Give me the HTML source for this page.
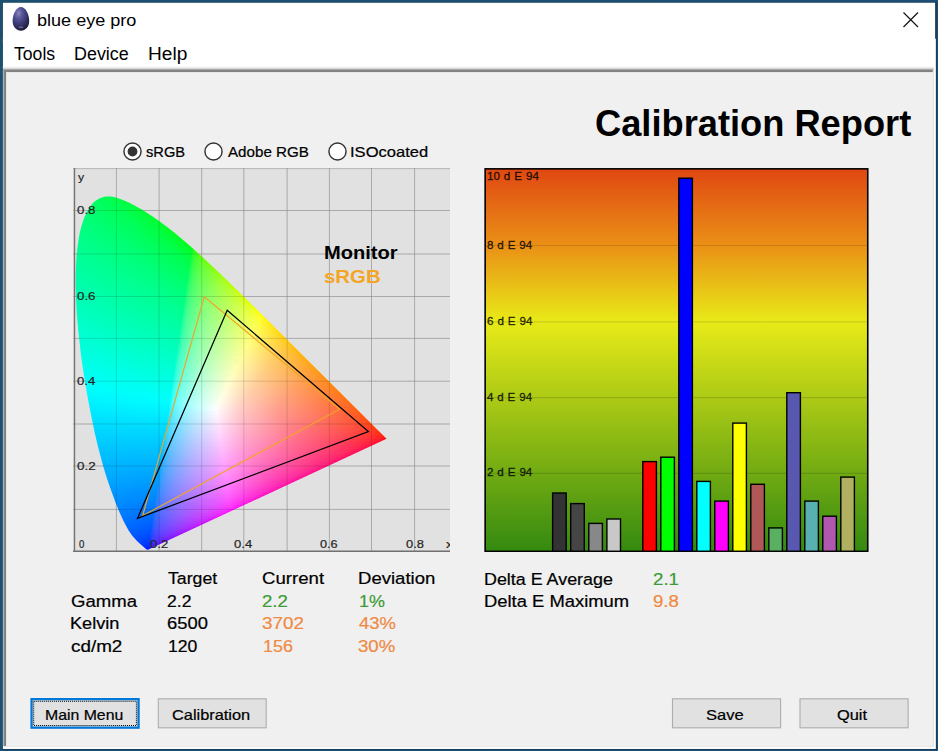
<!DOCTYPE html>
<html><head><meta charset="utf-8"><title>blue eye pro</title>
<style>
html,body{margin:0;padding:0}
body{width:938px;height:751px;overflow:hidden;background:#1b5071;position:relative;font-family:"Liberation Sans",sans-serif;color:#000}
.a{position:absolute;white-space:pre;line-height:1}
.t{transform-origin:0 0;-webkit-text-stroke:.22px}
.rad{position:absolute;width:19px;height:19px}
#cie{position:absolute;left:73px;top:168px;width:377px;height:384px;background:#e1e1e1;overflow:hidden}
#cfill{position:absolute;left:0;top:0;width:378px;height:384px;clip-path:polygon(75.0px 381.7px,73.6px 381.5px,66.1px 374.9px,63.3px 372.3px,59.3px 367.7px,55.5px 362.2px,50.9px 353.7px,46.4px 344.1px,42.6px 334.8px,36.8px 318.7px,33.5px 309.1px,30.2px 298.3px,25.2px 279.5px,21.9px 265.5px,17.1px 242.3px,13.9px 225.3px,11.0px 208.0px,8.4px 190.2px,5.3px 163.2px,3.8px 145.8px,2.9px 128.8px,2.6px 112.6px,2.7px 104.9px,3.4px 90.1px,4.0px 83.1px,5.8px 70.1px,6.9px 64.2px,8.3px 58.8px,9.8px 53.7px,11.6px 49.1px,13.4px 44.9px,15.4px 41.1px,17.5px 37.9px,19.8px 35.2px,22.2px 33.1px,24.7px 31.4px,27.3px 30.1px,29.9px 29.2px,32.6px 28.6px,35.3px 28.4px,38.1px 28.6px,40.9px 29.1px,46.7px 30.8px,52.4px 32.9px,55.3px 34.3px,61.1px 37.3px,69.6px 42.1px,80.4px 49.0px,85.7px 52.7px,93.5px 58.5px,101.2px 64.5px,108.9px 70.9px,119.1px 79.7px,131.8px 91.2px,147.0px 105.5px,162.2px 120.2px,194.8px 152.4px,313.5px 270.8px)}
#cfill i{position:absolute;display:block;height:2px}
#bars{position:absolute;left:485px;top:169px;width:383px;height:382px;background:linear-gradient(180deg,#e04812 0,#ea9016 20%,#e8ea18 40%,#348a10 100%)}
</style></head>
<body>
<svg class="a" style="left:0;top:0" width="938" height="751" viewBox="0 0 938 751">
<defs>
<linearGradient id="gt" x1="0" y1="66" x2="0" y2="72.2" gradientUnits="userSpaceOnUse"><stop offset="0" stop-color="#fdfdfd"/><stop offset=".25" stop-color="#f0f0f0"/><stop offset=".5" stop-color="#c2c2c2"/><stop offset=".66" stop-color="#8a8a8a"/><stop offset=".82" stop-color="#7a7a7a"/><stop offset=".93" stop-color="#868686"/><stop offset="1" stop-color="#c8c8c8"/></linearGradient>
<linearGradient id="gl" x1="2.9" y1="0" x2="6.2" y2="0" gradientUnits="userSpaceOnUse"><stop offset="0" stop-color="#a3bac7"/><stop offset=".3" stop-color="#a0b2bd"/><stop offset=".4" stop-color="#868889"/><stop offset=".85" stop-color="#7c7c7c"/><stop offset="1" stop-color="#c0c0c0"/></linearGradient>
</defs>
<linearGradient id="gb" x1="0" x2="1" y1="0" y2="0"><stop offset="0" stop-color="#1b5071"/><stop offset=".6" stop-color="#1c4f72"/><stop offset="1" stop-color="#1f4d76"/></linearGradient><rect width="938" height="751" fill="url(#gb)"/>
<rect x="2.1" y="2" width="934.9" height="747.9" fill="#173f59"/>
<rect x="2.9" y="2.75" width="932.2" height="40" fill="#fff"/>
<rect x="2.9" y="38.7" width="932.95" height="710.25" fill="#fff"/>
<rect x="6" y="72" width="927" height="674" fill="#f0f0f0"/>
<rect x="2.9" y="66" width="931" height="6.2" fill="url(#gt)"/>
<rect x="2.9" y="70.2" width="3.3" height="676" fill="url(#gl)"/>
<rect x="932.8" y="69.5" width="1.3" height="677.5" fill="#e5e5e5"/>
<rect x="4.5" y="746" width="929.5" height="1.05" fill="#e8e8e8"/>
</svg>

<!-- title bar -->
<svg class="a" style="left:10px;top:6px" width="22" height="27" viewBox="0 0 22 27">
<defs><radialGradient id="egg" cx="36%" cy="26%" r="74%"><stop offset="0" stop-color="#8886b8"/><stop offset=".3" stop-color="#58569a"/><stop offset=".62" stop-color="#3c3a76"/><stop offset=".88" stop-color="#2a2850"/><stop offset="1" stop-color="#201e3a"/></radialGradient></defs>
<path d="M10.9 1 C15.4 1 19.2 8 19.2 15 C19.2 20.6 15.6 24.7 10.9 24.7 C6.2 24.7 2.6 20.6 2.6 15 C2.6 8 6.4 1 10.9 1Z" fill="url(#egg)"/>
<ellipse cx="11" cy="21.2" rx="2.5" ry=".8" fill="#8886b0" opacity=".7"/>
</svg>
<svg class="a" style="left:900px;top:9px" width="22" height="22" viewBox="0 0 22 22"><path d="M3.5 3.5L18 18M18 3.5L3.500 18" stroke="#111" stroke-width="1.15" fill="none"/></svg>

<!-- menu -->


<!-- heading -->

<!-- radios -->
<svg class="rad" style="left:122.9px;top:141.5px" viewBox="0 0 19 19"><circle cx="9.5" cy="9.5" r="8.55" fill="#fff" stroke="#333" stroke-width="1.45"/><circle cx="9.5" cy="9.5" r="4.9" fill="#333"/></svg>
<svg class="rad" style="left:204.2px;top:141.5px" viewBox="0 0 19 19"><circle cx="9.5" cy="9.5" r="8.55" fill="#fff" stroke="#333" stroke-width="1.45"/></svg>
<svg class="rad" style="left:328.4px;top:141.5px" viewBox="0 0 19 19"><circle cx="9.5" cy="9.5" r="8.55" fill="#fff" stroke="#333" stroke-width="1.45"/></svg>

<!-- CIE chart -->
<div id="cie">
<svg class="a" style="left:0;top:0" width="378" height="384" viewBox="73 168 378 384">
<g stroke="#c3c3c3" stroke-width=".95" fill="none">
<path d="M116.4 168V552M159.1 168V552M201.7 168V552M243.8 168V552M287.1 168V552M329.4 168V552M371.5 168V552M414.6 168V552"/>
<path d="M73 210.5H451M73 254H451M73 296.5H451M73 338.4H451M73 381.2H451M73 424H451M73 466H451M73 509.4H451"/>
<path d="M73 168.6H451" stroke="#b4b4b4"/>
</g>
</svg>
<div id="cfill">
<i style="top:27px;left:29px;width:14px;background:linear-gradient(90deg,#00ff57 0px,#00ff4a 13px)"></i>
<i style="top:29px;left:24px;width:26px;background:linear-gradient(90deg,#00ff5e 0px,#00ff44 25px)"></i>
<i style="top:31px;left:21px;width:34px;background:linear-gradient(90deg,#00ff62 0px,#00ff3f 33px)"></i>
<i style="top:33px;left:19px;width:40px;background:linear-gradient(90deg,#00ff66 0px,#00ff43 35px,#00ff3c 39px)"></i>
<i style="top:35px;left:17px;width:46px;background:linear-gradient(90deg,#00ff69 0px,#00ff46 37px,#00ff39 45px)"></i>
<i style="top:37px;left:15px;width:52px;background:linear-gradient(90deg,#00ff6c 0px,#00ff49 39px,#00ff35 51px)"></i>
<i style="top:39px;left:14px;width:56px;background:linear-gradient(90deg,#00ff6e 0px,#00ff4a 41px,#00ff34 55px)"></i>
<i style="top:41px;left:13px;width:60px;background:linear-gradient(90deg,#00ff71 0px,#00ff4d 42px,#00ff32 59px)"></i>
<i style="top:43px;left:12px;width:65px;background:linear-gradient(90deg,#00ff73 0px,#00ff4f 44px,#00ff2f 63px,#00ff2d 64px)"></i>
<i style="top:45px;left:11px;width:69px;background:linear-gradient(90deg,#00ff75 0px,#00ff51 45px,#00ff32 65px,#00ff2a 68px)"></i>
<i style="top:47px;left:10px;width:73px;background:linear-gradient(90deg,#00ff77 0px,#00ff53 47px,#00ff32 68px,#00ff27 72px)"></i>
<i style="top:49px;left:9px;width:77px;background:linear-gradient(90deg,#00ff7a 0px,#00ff54 49px,#00ff35 70px,#00ff24 76px)"></i>
<i style="top:51px;left:9px;width:80px;background:linear-gradient(90deg,#00ff7b 0px,#00ff56 50px,#00ff35 72px,#00ff20 79px)"></i>
<i style="top:53px;left:8px;width:83px;background:linear-gradient(90deg,#00ff7d 0px,#00ff58 51px,#00ff38 74px,#00ff20 82px)"></i>
<i style="top:55px;left:7px;width:87px;background:linear-gradient(90deg,#00ff7f 0px,#00ff59 53px,#00ff38 77px,#00ff21 85px,#00ff1b 86px)"></i>
<i style="top:57px;left:7px;width:90px;background:linear-gradient(90deg,#00ff81 0px,#00ff5c 53px,#00ff3a 78px,#00ff21 87px,#00ff15 89px)"></i>
<i style="top:59px;left:6px;width:93px;background:linear-gradient(90deg,#00ff83 0px,#00ff5d 55px,#00ff3c 80px,#00ff21 90px,#00ff15 92px)"></i>
<i style="top:61px;left:6px;width:96px;background:linear-gradient(90deg,#00ff84 0px,#00ff5e 56px,#00ff3d 82px,#00ff21 92px,#00ff16 94px,#00ff07 95px)"></i>
<i style="top:63px;left:5px;width:99px;background:linear-gradient(90deg,#00ff86 0px,#00ff61 57px,#00ff3f 84px,#00ff26 94px,#00ff16 97px,#00ff08 98px)"></i>
<i style="top:65px;left:5px;width:102px;background:linear-gradient(90deg,#00ff88 0px,#00ff62 58px,#00ff3f 86px,#00ff26 96px,#00ff16 99px,#00ff00 101px)"></i>
<i style="top:67px;left:4px;width:105px;background:linear-gradient(90deg,#00ff8a 0px,#00ff63 60px,#00ff41 88px,#00ff26 99px,#00ff17 102px,#00ff00 104px)"></i>
<i style="top:69px;left:4px;width:108px;background:linear-gradient(90deg,#00ff8b 0px,#00ff65 60px,#00ff43 89px,#00ff27 101px,#00ff17 104px,#00ff00 106px,#00ff00 107px)"></i>
<i style="top:71px;left:4px;width:110px;background:linear-gradient(90deg,#00ff8d 0px,#00ff67 61px,#00ff44 91px,#00ff27 103px,#00ff17 106px,#00ff00 108px,#00ff00 109px)"></i>
<i style="top:73px;left:4px;width:112px;background:linear-gradient(90deg,#00ff8e 0px,#00ff68 62px,#00ff46 92px,#00ff2b 104px,#00ff18 108px,#00ff00 110px,#00ff00 111px)"></i>
<i style="top:75px;left:3px;width:116px;background:linear-gradient(90deg,#00ff90 0px,#00ff69 64px,#00ff46 95px,#00ff2b 107px,#00ff18 111px,#00ff00 113px,#00ff00 115px)"></i>
<i style="top:77px;left:3px;width:118px;background:linear-gradient(90deg,#00ff92 0px,#00ff6b 65px,#00ff48 96px,#00ff2b 109px,#00ff19 113px,#00ff00 115px,#05ff00 117px)"></i>
<i style="top:79px;left:3px;width:120px;background:linear-gradient(90deg,#00ff93 0px,#00ff6d 65px,#00ff4a 97px,#00ff2c 111px,#00ff19 115px,#00ff0f 116px,#15ff00 117px,#27ff00 118px,#31ff00 119px)"></i>
<i style="top:81px;left:3px;width:122px;background:linear-gradient(90deg,#00ff94 0px,#00ff6e 66px,#00ff4a 99px,#00ff2c 113px,#00ff20 116px,#1cff19 117px,#34ff00 119px,#42ff00 121px)"></i>
<i style="top:83px;left:2px;width:125px;background:linear-gradient(90deg,#00ff96 0px,#00ff6f 68px,#00ff4b 102px,#00ff2c 116px,#00ff29 117px,#21ff25 118px,#3dff10 121px,#44ff00 122px,#4eff00 124px)"></i>
<i style="top:85px;left:2px;width:128px;background:linear-gradient(90deg,#00ff98 0px,#00ff71 68px,#00ff4d 103px,#00ff33 116px,#25ff2d 118px,#3fff20 121px,#4bff10 123px,#50ff00 124px,#5cff00 127px)"></i>
<i style="top:87px;left:2px;width:130px;background:linear-gradient(90deg,#00ff99 0px,#00ff73 69px,#00ff4f 104px,#00ff38 116px,#1aff36 117px,#33ff30 119px,#51ff1a 124px,#56ff11 125px,#5aff00 126px,#65ff00 129px)"></i>
<i style="top:89px;left:2px;width:132px;background:linear-gradient(90deg,#00ff9b 0px,#00ff74 70px,#00ff4f 106px,#00ff3d 116px,#1fff3b 117px,#36ff36 119px,#57ff21 125px,#5fff11 127px,#63ff00 128px,#6dff00 131px)"></i>
<i style="top:91px;left:2px;width:134px;background:linear-gradient(90deg,#00ff9c 0px,#00ff75 71px,#00ff51 107px,#00ff44 115px,#0aff42 116px,#24ff40 117px,#3fff39 120px,#60ff21 127px,#68ff12 129px,#6bff00 130px,#74ff00 133px)"></i>
<i style="top:93px;left:2px;width:136px;background:linear-gradient(90deg,#00ff9d 0px,#00ff76 72px,#00ff51 109px,#00ff48 115px,#28ff44 117px,#47ff3c 121px,#69ff22 129px,#6fff12 131px,#72ff00 132px,#7bff00 135px)"></i>
<i style="top:95px;left:2px;width:138px;background:linear-gradient(90deg,#00ff9f 0px,#00ff78 72px,#00ff53 110px,#00ff4b 115px,#1dff4a 116px,#35ff46 118px,#57ff3a 124px,#71ff22 131px,#76ff13 133px,#79ff00 134px,#81ff00 137px)"></i>
<i style="top:97px;left:1px;width:142px;background:linear-gradient(90deg,#00ffa1 0px,#00ff7a 74px,#00ff55 112px,#00ff4f 116px,#22ff4d 117px,#3fff48 120px,#65ff38 128px,#78ff22 134px,#7dff13 136px,#80ff00 137px,#8aff00 141px)"></i>
<i style="top:99px;left:1px;width:144px;background:linear-gradient(90deg,#00ffa2 0px,#00ff7b 75px,#00ff57 113px,#00ff54 115px,#27ff51 117px,#41ff4c 120px,#66ff3d 128px,#7eff23 136px,#84ff14 138px,#86ff00 139px,#90ff00 143px)"></i>
<i style="top:101px;left:1px;width:146px;background:linear-gradient(90deg,#00ffa3 0px,#00ff7d 75px,#00ff58 114px,#00ff57 115px,#1bff56 116px,#35ff53 118px,#58ff49 124px,#80ff2c 136px,#8aff14 140px,#8cff00 141px,#96ff00 145px)"></i>
<i style="top:103px;left:1px;width:148px;background:linear-gradient(90deg,#00ffa5 0px,#00ff7e 76px,#00ff5a 115px,#21ff59 116px,#37ff56 118px,#59ff4d 124px,#83ff30 137px,#8dff1d 141px,#90ff15 142px,#92ff00 143px,#9bff00 147px)"></i>
<i style="top:105px;left:1px;width:150px;background:linear-gradient(90deg,#00ffa6 0px,#00ff80 77px,#00ff5e 114px,#0eff5d 115px,#25ff5c 116px,#41ff58 119px,#66ff4c 127px,#8aff30 139px,#93ff1e 143px,#96ff15 144px,#98ff00 145px,#a0ff00 149px)"></i>
<i style="top:107px;left:1px;width:152px;background:linear-gradient(90deg,#00ffa8 0px,#00ff81 78px,#00ff61 114px,#18ff60 115px,#29ff5f 116px,#49ff5a 120px,#72ff4b 130px,#92ff2d 142px,#9bff16 146px,#9dff00 147px,#a6ff00 151px)"></i>
<i style="top:109px;left:1px;width:154px;background:linear-gradient(90deg,#00ffa9 0px,#00ff83 78px,#00ff64 114px,#1fff63 115px,#37ff61 117px,#59ff59 123px,#87ff41 137px,#9cff24 146px,#a1ff16 148px,#a3ff00 149px,#abff00 153px)"></i>
<i style="top:111px;left:1px;width:156px;background:linear-gradient(90deg,#00ffab 0px,#00ff84 79px,#00ff67 114px,#24ff66 115px,#41ff62 118px,#67ff58 126px,#97ff37 143px,#a4ff1f 149px,#a6ff17 150px,#a8ff00 151px,#b0ff00 155px)"></i>
<i style="top:113px;left:1px;width:158px;background:linear-gradient(90deg,#00ffac 0px,#00ff85 80px,#00ff6a 113px,#28ff68 115px,#43ff65 118px,#68ff5b 126px,#9aff3b 144px,#a9ff1f 151px,#abff17 152px,#adff00 153px,#b5ff00 157px)"></i>
<i style="top:115px;left:1px;width:160px;background:linear-gradient(90deg,#00ffad 0px,#00ff87 81px,#00ff6d 113px,#1dff6c 114px,#36ff6a 116px,#5aff63 122px,#88ff50 136px,#a6ff32 149px,#aeff20 153px,#b0ff18 154px,#b2ff02 155px,#baff00 159px)"></i>
<i style="top:117px;left:1px;width:162px;background:linear-gradient(90deg,#00ffaf 0px,#00ff89 81px,#00ff70 113px,#22ff6f 114px,#39ff6d 116px,#5bff66 122px,#89ff54 136px,#a9ff36 150px,#b3ff20 155px,#b5ff18 156px,#b7ff06 157px,#b9ff00 158px,#bfff00 161px)"></i>
<i style="top:119px;left:1px;width:164px;background:linear-gradient(90deg,#00ffb0 0px,#00ff8a 82px,#00ff73 112px,#27ff71 114px,#43ff6e 117px,#69ff66 125px,#9bff4b 143px,#b3ff2f 154px,#baff19 158px,#bcff08 159px,#beff00 160px,#c3ff00 163px)"></i>
<i style="top:121px;left:1px;width:167px;background:linear-gradient(90deg,#00ffb2 0px,#00ff8b 83px,#00ff76 112px,#1aff75 113px,#2bff74 114px,#4bff70 118px,#75ff65 128px,#aaff44 149px,#bcff27 158px,#bfff19 160px,#c1ff0a 161px,#c3ff00 162px,#caff00 166px)"></i>
<i style="top:123px;left:1px;width:169px;background:linear-gradient(90deg,#00ffb3 0px,#00ff8d 84px,#00ff78 112px,#20ff77 113px,#38ff75 115px,#5cff6f 121px,#8aff5f 135px,#b3ff3f 153px,#c0ff27 160px,#c4ff1a 162px,#c8ff00 164px,#cfff00 168px)"></i>
<i style="top:125px;left:1px;width:171px;background:linear-gradient(90deg,#00ffb5 0px,#00ff8f 84px,#00ff7b 111px,#08ff7a 112px,#25ff79 113px,#42ff77 116px,#69ff6f 124px,#9aff5a 141px,#bcff3a 157px,#c7ff22 163px,#c9ff1a 164px,#cdff00 166px,#d3ff00 170px)"></i>
<i style="top:127px;left:1px;width:173px;background:linear-gradient(90deg,#00ffb6 0px,#00ff90 85px,#00ff7e 111px,#2aff7c 113px,#45ff79 116px,#6bff72 124px,#9eff5c 142px,#c1ff3b 159px,#ccff22 165px,#ceff1b 166px,#d1ff00 168px,#d8ff00 172px)"></i>
<i style="top:129px;left:1px;width:175px;background:linear-gradient(90deg,#00ffb8 0px,#00ff91 86px,#00ff80 111px,#1eff7f 112px,#38ff7d 114px,#5cff78 120px,#89ff6b 133px,#bdff48 156px,#cdff2d 165px,#d3ff1b 168px,#d6ff00 170px,#ddff00 174px)"></i>
<i style="top:131px;left:2px;width:176px;background:linear-gradient(90deg,#00ffb9 0px,#00ff93 86px,#00ff82 110px,#24ff81 111px,#3aff80 113px,#5eff7b 119px,#8dff6d 133px,#c0ff4a 156px,#d2ff2d 166px,#d7ff1c 169px,#dbff00 171px,#e2ff00 175px)"></i>
<i style="top:133px;left:2px;width:178px;background:linear-gradient(90deg,#00ffba 0px,#00ff94 87px,#00ff85 109px,#28ff84 111px,#44ff81 114px,#6cff7a 122px,#9dff69 139px,#c9ff46 160px,#d9ff29 169px,#dcff1c 171px,#e0ff00 173px,#e6ff00 177px)"></i>
<i style="top:135px;left:2px;width:180px;background:linear-gradient(90deg,#00ffbc 0px,#00ff96 88px,#00ff87 109px,#1cff87 110px,#37ff85 112px,#58ff81 117px,#84ff76 129px,#beff57 154px,#d8ff36 168px,#e1ff1d 173px,#e4ff00 175px,#ebff00 179px)"></i>
<i style="top:137px;left:2px;width:182px;background:linear-gradient(90deg,#00ffbd 0px,#00ff98 88px,#00ff8a 109px,#22ff89 110px,#3aff87 112px,#5eff83 118px,#8bff77 131px,#c7ff54 158px,#ddff37 170px,#e6ff1d 175px,#e9ff00 177px,#f0ff00 181px)"></i>
<i style="top:139px;left:2px;width:184px;background:linear-gradient(90deg,#00ffbf 0px,#00ff99 89px,#00ff8d 108px,#0cff8c 109px,#27ff8b 110px,#44ff89 113px,#6cff83 121px,#9eff73 138px,#d2ff4f 163px,#e5ff2f 174px,#eaff1d 177px,#ecff12 178px,#eeff00 179px,#f4ff00 183px)"></i>
<i style="top:141px;left:2px;width:186px;background:linear-gradient(90deg,#00ffc0 0px,#00ff9a 90px,#00ff8f 108px,#19ff8e 109px,#2bff8d 110px,#47ff8b 113px,#6eff85 121px,#a0ff75 138px,#d5ff51 164px,#e9ff34 175px,#efff1e 179px,#f1ff12 180px,#f3ff00 181px,#f9ff00 185px)"></i>
<i style="top:143px;left:2px;width:188px;background:linear-gradient(90deg,#00ffc2 0px,#00ff9c 90px,#00ff91 108px,#20ff90 109px,#39ff8f 111px,#5fff8b 117px,#8cff80 130px,#caff61 157px,#e8ff3e 174px,#f2ff26 180px,#f6ff13 182px,#f7ff00 183px,#feff00 187px)"></i>
<i style="top:145px;left:2px;width:190px;background:linear-gradient(90deg,#00ffc3 0px,#00ff9e 91px,#00ff93 108px,#25ff93 109px,#44ff91 112px,#69ff8b 119px,#9bff7e 135px,#d8ff5a 164px,#f1ff38 178px,#f9ff1f 183px,#faff14 184px,#fcff00 185px,#fffb00 189px)"></i>
<i style="top:147px;left:2px;width:192px;background:linear-gradient(90deg,#00ffc5 0px,#00ff9f 92px,#00ff96 107px,#2aff95 109px,#46ff93 112px,#6eff8d 120px,#a1ff7f 137px,#ddff5a 166px,#f5ff39 180px,#feff1f 185px,#ffff14 186px,#fffd00 187px,#fff700 191px)"></i>
<i style="top:149px;left:3px;width:193px;background:linear-gradient(90deg,#00ffc6 0px,#00ffa1 92px,#00ff98 106px,#1eff98 107px,#39ff96 109px,#5aff93 114px,#88ff8a 126px,#c4ff72 151px,#eeff4d 174px,#feff32 183px,#fffc20 186px,#fffa15 187px,#fff800 188px,#fff200 192px)"></i>
<i style="top:151px;left:3px;width:195px;background:linear-gradient(90deg,#00ffc7 0px,#00ffa2 93px,#00ff9a 106px,#24ff9a 107px,#3cff99 109px,#61ff95 115px,#8fff8b 128px,#cdff70 155px,#f3ff4e 176px,#fffc31 185px,#fff71f 188px,#fff515 189px,#fff400 190px,#ffee00 194px)"></i>
<i style="top:153px;left:3px;width:197px;background:linear-gradient(90deg,#00ffc9 0px,#00ffa4 93px,#00ff9d 105px,#10ff9d 106px,#29ff9c 107px,#46ff9a 110px,#6fff95 118px,#a3ff88 135px,#e7ff61 168px,#fffd41 183px,#fff426 189px,#fff115 191px,#ffef00 192px,#ffea00 196px)"></i>
<i style="top:155px;left:3px;width:199px;background:linear-gradient(90deg,#00ffca 0px,#00ffa6 94px,#00ff9f 105px,#1bff9f 106px,#2dff9e 107px,#49ff9c 110px,#71ff97 118px,#a4ff8a 135px,#eaff64 169px,#fffc47 183px,#ffef26 191px,#ffed15 193px,#ffeb00 194px,#ffe600 198px)"></i>
<i style="top:157px;left:3px;width:201px;background:linear-gradient(90deg,#00ffcc 0px,#00ffa7 95px,#00ffa2 105px,#22ffa1 106px,#3bffa0 108px,#61ff9c 114px,#90ff93 127px,#cfff7b 154px,#fdff56 179px,#ffee30 191px,#ffea1f 194px,#ffe816 195px,#ffe700 196px,#ffe200 200px)"></i>
<i style="top:159px;left:3px;width:203px;background:linear-gradient(90deg,#00ffcd 0px,#00ffa9 95px,#00ffa4 105px,#27ffa3 106px,#46ffa1 109px,#6cff9d 116px,#9fff92 132px,#e4ff72 164px,#fffd58 180px,#ffea30 193px,#ffe416 197px,#ffe300 198px,#ffde00 202px)"></i>
<i style="top:161px;left:4px;width:204px;background:linear-gradient(90deg,#00ffcf 0px,#00ffaa 96px,#00ffa6 103px,#2cffa5 105px,#49ffa4 108px,#72ff9f 116px,#a6ff93 133px,#efff6f 168px,#fffc5c 179px,#ffe733 193px,#ffe11f 197px,#ffe016 198px,#ffdf00 199px,#ffda00 203px)"></i>
<i style="top:163px;left:4px;width:206px;background:linear-gradient(90deg,#00ffd0 0px,#00ffac 96px,#00ffa9 103px,#1fffa8 104px,#3bffa7 106px,#5dffa4 111px,#8bff9c 123px,#c7ff89 147px,#fffe65 177px,#ffe437 194px,#ffdd1f 199px,#ffdc16 200px,#ffdb00 201px,#ffd600 205px)"></i>
<i style="top:165px;left:4px;width:208px;background:linear-gradient(90deg,#00ffd2 0px,#00ffae 97px,#00ffab 103px,#25ffaa 104px,#3effa9 106px,#64ffa6 112px,#93ff9d 125px,#d3ff88 152px,#fffe6a 176px,#ffe036 196px,#ffda1f 201px,#ffd816 202px,#ffd700 203px,#ffd300 207px)"></i>
<i style="top:167px;left:4px;width:210px;background:linear-gradient(90deg,#00ffd3 0px,#00ffb0 98px,#00ffad 102px,#2affac 104px,#49ffab 107px,#6effa7 114px,#a2ff9c 130px,#e9ff80 162px,#fffc6d 176px,#ffdd39 197px,#ffd61f 203px,#ffd517 204px,#ffd300 205px,#ffcf00 209px)"></i>
<i style="top:169px;left:4px;width:212px;background:linear-gradient(90deg,#00ffd5 0px,#00ffb2 98px,#00ffb0 102px,#1dffaf 103px,#2fffaf 104px,#4bffad 107px,#74ffa8 115px,#a9ff9d 132px,#f4ff7e 167px,#fffc72 175px,#ffd939 199px,#ffd21f 205px,#ffd117 206px,#ffd000 207px,#ffcc00 211px)"></i>
<i style="top:171px;left:5px;width:213px;background:linear-gradient(90deg,#00ffd6 0px,#00ffb3 99px,#00ffb2 101px,#24ffb1 102px,#3dffb0 104px,#5fffad 109px,#8effa6 121px,#cbff95 145px,#fffe79 172px,#ffd63b 199px,#ffce1f 206px,#ffcd17 207px,#ffcc00 208px,#ffc800 212px)"></i>
<i style="top:173px;left:5px;width:215px;background:linear-gradient(90deg,#00ffd8 0px,#00ffb5 99px,#00ffb4 100px,#0affb4 101px,#29ffb3 102px,#49ffb2 105px,#6fffae 112px,#a1ffa5 127px,#e8ff8d 158px,#fffc7c 172px,#ffd33b 201px,#ffcb1f 208px,#ffca17 209px,#ffc903 210px,#ffc500 214px)"></i>
<i style="top:175px;left:5px;width:217px;background:linear-gradient(90deg,#00ffda 0px,#00ffb7 100px,#2effb6 102px,#4bffb4 105px,#75ffb0 113px,#abffa5 130px,#f5ff8a 164px,#fffc80 171px,#ffcf3b 203px,#ffc71f 210px,#ffc617 211px,#ffc506 212px,#ffc400 213px,#ffc100 216px)"></i>
<i style="top:177px;left:5px;width:219px;background:linear-gradient(90deg,#00ffdb 0px,#00ffb9 100px,#21ffb8 101px,#3dffb7 103px,#60ffb5 108px,#90ffae 120px,#ceff9e 144px,#fffe87 169px,#ffcf42 202px,#ffc524 211px,#ffc317 213px,#ffc208 214px,#ffc100 215px,#ffbe00 218px)"></i>
<i style="top:179px;left:6px;width:220px;background:linear-gradient(90deg,#00ffdd 0px,#00ffbb 99px,#27ffba 100px,#40ffba 102px,#67ffb6 108px,#97ffaf 121px,#daff9d 148px,#fffc89 168px,#ffcd47 201px,#ffc329 211px,#ffc017 214px,#ffbe00 216px,#ffbb00 219px)"></i>
<i style="top:181px;left:6px;width:222px;background:linear-gradient(90deg,#00ffde 0px,#00ffbe 98px,#2cffbd 100px,#4bffbb 103px,#72ffb8 110px,#a5ffaf 125px,#ecff99 156px,#fffc8d 167px,#ffcd4d 200px,#ffbf28 213px,#ffbc17 216px,#ffba00 218px,#ffb800 221px)"></i>
<i style="top:183px;left:6px;width:224px;background:linear-gradient(90deg,#00ffe0 0px,#00ffc0 98px,#1fffbf 99px,#31ffbf 100px,#4effbd 103px,#78ffba 111px,#aeffb0 128px,#fcff96 163px,#ffc84a 203px,#ffbc28 215px,#ffb917 218px,#ffb700 220px,#ffb400 223px)"></i>
<i style="top:185px;left:6px;width:226px;background:linear-gradient(90deg,#00ffe2 0px,#00ffc2 98px,#26ffc2 99px,#40ffc1 101px,#62ffbe 106px,#93ffb8 118px,#d2ffaa 142px,#fffc96 165px,#ffcd5a 197px,#ffba2f 215px,#ffb618 220px,#ffb400 222px,#ffb100 225px)"></i>
<i style="top:187px;left:7px;width:227px;background:linear-gradient(90deg,#00ffe3 0px,#00ffc5 96px,#0fffc4 97px,#2bffc4 98px,#4bffc2 101px,#73ffbf 108px,#a7ffb7 123px,#f0ffa3 154px,#fffc9a 163px,#ffcd5e 195px,#ffb832 215px,#ffb318 221px,#ffb100 223px,#ffae00 226px)"></i>
<i style="top:189px;left:7px;width:229px;background:linear-gradient(90deg,#00ffe5 0px,#00ffc7 96px,#1cffc7 97px,#30ffc6 98px,#4effc5 101px,#74ffc2 108px,#a8ffba 123px,#f2ffa6 154px,#fffc9e 162px,#ffce65 193px,#ffb635 216px,#ffb01e 222px,#ffaf0d 224px,#ffae00 225px,#ffab00 228px)"></i>
<i style="top:191px;left:7px;width:231px;background:linear-gradient(90deg,#00ffe7 0px,#00ffc9 96px,#23ffc9 97px,#3fffc8 99px,#63ffc6 104px,#91ffc0 115px,#d0ffb4 138px,#fffca1 161px,#ffcd69 192px,#ffb337 217px,#ffad1e 224px,#ffac0d 226px,#ffab00 227px,#ffa800 230px)"></i>
<i style="top:193px;left:7px;width:233px;background:linear-gradient(90deg,#00ffe8 0px,#00ffcb 96px,#29ffcb 97px,#42ffca 99px,#6affc8 105px,#9dffc1 118px,#e0ffb3 144px,#fffca5 160px,#ffcd6d 191px,#ffb037 219px,#ffaa1e 226px,#ffa80e 228px,#ffa800 229px,#ffa500 232px)"></i>
<i style="top:195px;left:8px;width:234px;background:linear-gradient(90deg,#00ffea 0px,#00ffce 94px,#2fffcd 96px,#4effcc 99px,#76ffc9 106px,#aaffc2 121px,#f5ffaf 152px,#fffba7 159px,#ffcb6f 190px,#ffae39 219px,#ffa71e 227px,#ffa50e 229px,#ffa500 230px,#ffa200 233px)"></i>
<i style="top:197px;left:8px;width:236px;background:linear-gradient(90deg,#00ffec 0px,#00ffd0 94px,#21ffd0 95px,#33ffd0 96px,#50ffce 99px,#7cffcb 107px,#b4ffc3 124px,#ffffaf 156px,#ffd07a 185px,#ffac3b 220px,#ffa41e 229px,#ffa20f 231px,#ffa200 232px,#ff9f00 235px)"></i>
<i style="top:199px;left:8px;width:238px;background:linear-gradient(90deg,#00ffed 0px,#00ffd3 94px,#28ffd2 95px,#42ffd2 97px,#66ffd0 102px,#94ffcb 113px,#d5ffbf 136px,#fffdb1 156px,#ffcd7a 186px,#ffa83b 222px,#ffa11e 231px,#ff9f0f 233px,#ff9f00 234px,#ff9c00 237px)"></i>
<i style="top:201px;left:8px;width:240px;background:linear-gradient(90deg,#00ffef 0px,#00ffd5 93px,#12ffd5 94px,#2dffd5 95px,#4effd4 98px,#77ffd1 105px,#acffca 120px,#f9ffb9 151px,#fffbb2 156px,#ffcb7c 186px,#ffa53b 224px,#ff9e1e 233px,#ff9d0f 235px,#ff9c00 236px,#ff9a00 239px)"></i>
<i style="top:203px;left:9px;width:241px;background:linear-gradient(90deg,#00fff1 0px,#00ffd8 92px,#1effd7 93px,#32ffd7 94px,#50ffd6 97px,#79ffd3 104px,#aeffcd 119px,#fbffbc 150px,#fff5b0 157px,#ffc578 189px,#ffa23a 225px,#ff9b1e 234px,#ff9a10 236px,#ff9900 237px,#ff9700 240px)"></i>
<i style="top:205px;left:9px;width:243px;background:linear-gradient(90deg,#00fff3 0px,#00ffda 92px,#26ffda 93px,#42ffd9 95px,#66ffd7 100px,#96ffd3 111px,#d8ffc8 134px,#fffdbc 152px,#ffcd86 181px,#ffa03c 226px,#ff981e 236px,#ff9710 238px,#ff9600 239px,#ff9400 242px)"></i>
<i style="top:207px;left:9px;width:245px;background:linear-gradient(90deg,#00fff4 0px,#00ffdd 91px,#04ffdd 92px,#2cffdc 93px,#45ffdb 95px,#69ffda 100px,#98ffd5 111px,#daffcb 134px,#fffdbf 151px,#ffce8b 179px,#ff9e40 226px,#ff9622 237px,#ff9410 240px,#ff9300 241px,#ff9100 244px)"></i>
<i style="top:209px;left:10px;width:246px;background:linear-gradient(90deg,#00fff6 0px,#00ffdf 90px,#31ffdf 92px,#51ffde 95px,#7affdb 102px,#b1ffd5 117px,#ffffc5 148px,#ffcf90 176px,#ff9f49 222px,#ff9426 237px,#ff9110 241px,#ff9000 242px,#ff8e00 245px)"></i>
<i style="top:211px;left:10px;width:248px;background:linear-gradient(90deg,#00fff8 0px,#00ffe2 90px,#23ffe1 91px,#35ffe1 92px,#53ffe0 95px,#7cffdd 102px,#b2ffd8 117px,#ffffc9 147px,#ffcf93 175px,#ff9f4e 221px,#ff9229 238px,#ff8f19 242px,#ff8e11 243px,#ff8d00 244px,#ff8b00 247px)"></i>
<i style="top:213px;left:10px;width:250px;background:linear-gradient(90deg,#00fffa 0px,#00ffe4 90px,#2affe4 91px,#45ffe3 93px,#69ffe1 98px,#9affdd 109px,#ddffd4 132px,#fffdca 147px,#ffce97 174px,#ff9f53 219px,#ff8f2c 239px,#ff8c19 244px,#ff8b11 245px,#ff8a00 246px,#ff8800 249px)"></i>
<i style="top:215px;left:11px;width:251px;background:linear-gradient(90deg,#00fffc 0px,#00ffe7 88px,#2fffe6 90px,#51ffe5 93px,#7bffe3 100px,#b3ffdd 115px,#ffffd0 144px,#ffcf9b 171px,#ffa05a 215px,#ff8d2f 239px,#ff8919 245px,#ff8811 246px,#ff8800 247px,#ff8600 250px)"></i>
<i style="top:217px;left:11px;width:253px;background:linear-gradient(90deg,#00fffe 0px,#00ffe9 88px,#20ffe9 89px,#34ffe9 90px,#54ffe8 93px,#7dffe6 100px,#b5ffe0 115px,#ffffd4 143px,#ffcf9f 170px,#ff9f5e 214px,#ff8b31 240px,#ff8619 247px,#ff8511 248px,#ff8500 249px,#ff8300 252px)"></i>
<i style="top:219px;left:11px;width:255px;background:linear-gradient(90deg,#00feff 0px,#00ffec 88px,#28ffec 89px,#45ffeb 91px,#6affe9 96px,#9cffe6 107px,#deffdd 129px,#fffdd5 143px,#ffcea2 169px,#ff9e62 213px,#ff8933 241px,#ff8319 249px,#ff8212 250px,#ff8200 251px,#ff8000 254px)"></i>
<i style="top:221px;left:12px;width:256px;background:linear-gradient(90deg,#00fdff 0px,#00ffef 86px,#0dffef 87px,#2effee 88px,#48ffee 90px,#6dffec 95px,#9effe9 106px,#e3ffe0 129px,#fffdd9 141px,#ffcea5 167px,#ff9f67 210px,#ff8635 241px,#ff811e 249px,#ff8012 251px,#ff7f00 252px,#ff7d00 255px)"></i>
<i style="top:223px;left:12px;width:258px;background:linear-gradient(90deg,#00fbff 0px,#00fff8 59px,#00fff1 86px,#1dfff1 87px,#33fff1 88px,#54fff0 91px,#7fffee 98px,#b8ffe9 113px,#feffde 139px,#ffcea8 166px,#ff9e6a 209px,#ff8437 242px,#ff7e1e 251px,#ff7d12 253px,#ff7c00 254px,#ff7a00 257px)"></i>
<i style="top:225px;left:12px;width:260px;background:linear-gradient(90deg,#00f9ff 0px,#00fffa 61px,#00fff4 86px,#26fff4 87px,#44fff3 89px,#6bfff2 94px,#9effee 105px,#e2ffe7 127px,#fffde0 139px,#ffcfad 164px,#ff9f70 206px,#ff8137 244px,#ff7b1e 253px,#ff7a12 255px,#ff7900 256px,#ff7700 259px)"></i>
<i style="top:227px;left:13px;width:261px;background:linear-gradient(90deg,#00f7ff 0px,#00fffb 68px,#00fff7 85px,#2cfff6 86px,#48fff6 88px,#6efff4 93px,#a0fff1 104px,#e4ffea 126px,#fffee4 137px,#ffceb0 162px,#ff9f74 203px,#ff7f39 244px,#ff781e 254px,#ff7712 256px,#ff7600 257px,#ff7400 260px)"></i>
<i style="top:229px;left:13px;width:263px;background:linear-gradient(90deg,#00f5ff 0px,#00fffb 77px,#00fffa 84px,#32fff9 86px,#54fff8 89px,#80fff6 96px,#b7fff2 110px,#feffe9 135px,#ffccb1 162px,#ff9c74 204px,#ff7c38 246px,#ff751e 256px,#ff7413 258px,#ff7300 259px,#ff7100 262px)"></i>
<i style="top:231px;left:13px;width:265px;background:linear-gradient(90deg,#00f3ff 0px,#00fffc 84px,#23fffc 85px,#37fffc 86px,#57fffb 89px,#82fff9 96px,#bdfff5 111px,#fffeeb 135px,#ffcfb7 159px,#ff9f7d 199px,#ff793a 247px,#ff721e 258px,#ff7113 260px,#ff7003 261px,#ff6e00 264px)"></i>
<i style="top:233px;left:14px;width:266px;background:linear-gradient(90deg,#00f1ff 0px,#00ffff 83px,#2bffff 84px,#48fffe 86px,#6ffffd 91px,#a3fffa 102px,#e8fff3 124px,#fffeef 133px,#ffceba 157px,#ff9f7f 197px,#ff773b 247px,#ff6f1e 259px,#ff6e13 261px,#ff6d05 262px,#ff6c00 264px,#ff6b00 265px)"></i>
<i style="top:235px;left:14px;width:268px;background:linear-gradient(90deg,#00efff 0px,#00fcff 82px,#11fcff 83px,#30fdff 84px,#4bfdff 86px,#71feff 91px,#a1fffd 101px,#e5fff7 122px,#fffef3 132px,#ffcfbf 155px,#ffa085 194px,#ff743b 249px,#ff6c1e 261px,#ff6b13 263px,#ff6a07 264px,#ff6900 265px,#ff6800 267px)"></i>
<i style="top:237px;left:15px;width:269px;background:linear-gradient(90deg,#00eeff 0px,#00f9ff 81px,#1ffaff 82px,#35faff 83px,#56faff 86px,#82fcff 93px,#c0fffe 108px,#fffef7 130px,#ffcfc2 153px,#ffa089 191px,#ff713b 250px,#ff691e 262px,#ff6813 264px,#ff6600 266px,#ff6500 268px)"></i>
<i style="top:239px;left:15px;width:271px;background:linear-gradient(90deg,#00ecff 0px,#00f7ff 81px,#27f7ff 82px,#46f7ff 84px,#6df8ff 89px,#a2fbff 100px,#edfffe 122px,#fffbf8 130px,#ffcdc3 153px,#ff9d89 192px,#ff6e3c 251px,#ff6621 263px,#ff6413 266px,#ff6300 268px,#ff6200 270px)"></i>
<i style="top:241px;left:15px;width:273px;background:linear-gradient(90deg,#00eaff 0px,#00f4ff 81px,#2df4ff 82px,#48f5ff 84px,#6ef5ff 89px,#a2f8ff 100px,#fdfeff 127px,#ffc9c3 154px,#ff9988 194px,#ff6b3c 253px,#ff6321 265px,#ff6114 268px,#ff6000 270px,#ff5f00 272px)"></i>
<i style="top:243px;left:16px;width:274px;background:linear-gradient(90deg,#00e8ff 0px,#00f1ff 79px,#32f2ff 81px,#54f2ff 84px,#80f3ff 91px,#bcf6ff 106px,#fff9fc 128px,#ffcac7 151px,#ff9a8d 190px,#ff683c 254px,#ff6021 266px,#ff5e14 269px,#ff5d00 271px,#ff5b00 273px)"></i>
<i style="top:245px;left:16px;width:276px;background:linear-gradient(90deg,#00e6ff 0px,#00efff 79px,#23efff 80px,#36efff 81px,#56efff 84px,#80f0ff 91px,#c0f3ff 107px,#fff6fd 128px,#ffc8c8 151px,#ff998e 190px,#ff653c 256px,#ff5c1e 269px,#ff5b14 271px,#ff5900 273px,#ff5800 275px)"></i>
<i style="top:247px;left:17px;width:277px;background:linear-gradient(90deg,#00e4ff 0px,#00ecff 78px,#2aecff 79px,#46ecff 81px,#6cedff 86px,#9fefff 97px,#f4f4ff 123px,#fff1fb 128px,#ffc5c8 151px,#ff958d 191px,#ff613b 257px,#ff581e 270px,#ff560b 273px,#ff5600 274px,#ff5400 276px)"></i>
<i style="top:249px;left:17px;width:279px;background:linear-gradient(90deg,#00e2ff 0px,#00e9ff 77px,#14e9ff 78px,#2fe9ff 79px,#52eaff 82px,#7debff 89px,#b9edff 104px,#fff1ff 127px,#ffc4ca 150px,#ff9490 190px,#ff5e3b 259px,#ff551e 272px,#ff530b 275px,#ff5200 276px,#ff5100 278px)"></i>
<i style="top:251px;left:17px;width:281px;background:linear-gradient(90deg,#00e0ff 0px,#00e7ff 77px,#1fe7ff 78px,#34e7ff 79px,#53e7ff 82px,#7ee8ff 89px,#bceaff 105px,#ffecfd 128px,#ffbfc8 152px,#ff8e8c 194px,#ff5b3c 260px,#ff5221 273px,#ff5014 276px,#ff4e00 278px,#ff4d00 280px)"></i>
<i style="top:253px;left:18px;width:282px;background:linear-gradient(90deg,#00dfff 0px,#00e4ff 76px,#27e4ff 77px,#44e4ff 79px,#69e5ff 84px,#9ce6ff 95px,#efeaff 121px,#ffe9fe 127px,#ffbdc9 151px,#ff8c8d 193px,#ff573c 261px,#ff4e21 274px,#ff4c14 277px,#ff4a00 279px,#ff4900 281px)"></i>
<i style="top:255px;left:18px;width:284px;background:linear-gradient(90deg,#00ddff 0px,#00e1ff 75px,#08e2ff 76px,#2ce2ff 77px,#46e2ff 79px,#70e2ff 85px,#a8e4ff 98px,#ffe7fe 127px,#ffbaca 151px,#ff8a8e 193px,#ff543c 263px,#ff4a21 276px,#ff470c 280px,#ff4600 281px,#ff4500 283px)"></i>
<i style="top:257px;left:19px;width:285px;background:linear-gradient(90deg,#00dbff 0px,#00dfff 74px,#31dfff 76px,#51dfff 79px,#7be0ff 86px,#b9e1ff 102px,#ffe2fd 127px,#ffb5c7 152px,#ff858c 195px,#ff503c 264px,#ff451d 278px,#ff430d 281px,#ff4200 282px,#ff4000 284px)"></i>
<i style="top:259px;left:19px;width:287px;background:linear-gradient(90deg,#00d9ff 0px,#00dcff 74px,#23dcff 75px,#41ddff 77px,#67ddff 82px,#99deff 93px,#e8e0ff 118px,#ffdffd 127px,#ffb3c8 152px,#ff838d 195px,#ff4c3b 266px,#ff401d 280px,#ff3e0d 283px,#ff3d00 284px,#ff3b00 286px)"></i>
<i style="top:261px;left:19px;width:289px;background:linear-gradient(90deg,#00d7ff 0px,#00daff 74px,#2adaff 75px,#44daff 77px,#68daff 82px,#9ddbff 94px,#f0ddff 121px,#ffdafb 128px,#ffafc8 153px,#ff808c 197px,#ff473b 268px,#ff3b1d 282px,#ff390d 285px,#ff3800 286px,#ff3600 288px)"></i>
<i style="top:263px;left:20px;width:290px;background:linear-gradient(90deg,#00d5ff 0px,#00d7ff 72px,#2fd7ff 74px,#4fd8ff 77px,#79d8ff 84px,#b5d9ff 100px,#ffdaff 126px,#ffafca 151px,#ff7f90 194px,#ff433b 269px,#ff361d 283px,#ff330e 286px,#ff3200 287px,#ff2f00 289px)"></i>
<i style="top:265px;left:20px;width:292px;background:linear-gradient(90deg,#00d3ff 0px,#00d5ff 72px,#20d5ff 73px,#33d5ff 74px,#51d5ff 77px,#7ed5ff 85px,#bbd6ff 102px,#ffd5fd 127px,#ffaac8 153px,#ff7a8c 198px,#ff3f3c 270px,#ff3121 284px,#ff2c0e 288px,#ff2b00 289px,#ff2800 291px)"></i>
<i style="top:267px;left:21px;width:293px;background:linear-gradient(90deg,#00d2ff 0px,#00d2ff 71px,#26d2ff 72px,#42d2ff 74px,#66d3ff 79px,#9bd3ff 91px,#ebd3ff 118px,#ffd3fe 126px,#ffa7c9 152px,#ff778e 197px,#ff393c 271px,#ff2921 285px,#ff230e 289px,#ff2200 290px,#ff1e00 292px)"></i>
<i style="top:269px;left:21px;width:295px;background:linear-gradient(90deg,#00d0ff 0px,#00d0ff 70px,#0dd0ff 71px,#2cd0ff 72px,#4dd0ff 75px,#77d0ff 82px,#b2d0ff 98px,#ffd0fe 126px,#ffa5ca 152px,#ff758f 197px,#ff333c 273px,#ff2021 287px,#ff160e 291px,#ff1300 292px,#ff0600 294px)"></i>
<i style="top:271px;left:22px;width:293px;background:linear-gradient(90deg,#00ceff 0px,#00ceff 69px,#1cceff 70px,#30cdff 71px,#4fcdff 74px,#77cdff 81px,#b2cdff 97px,#ffcdff 125px,#ffa1c9 152px,#ff718e 198px,#ff2d3d 273px,#ff1626 286px,#ff0d21 288px,#ff001d 289px,#ff000f 292px)"></i>
<i style="top:273px;left:22px;width:289px;background:linear-gradient(90deg,#00ccff 0px,#00cbff 69px,#23cbff 70px,#40cbff 72px,#64cbff 77px,#98cbff 89px,#e7caff 116px,#ffc8fd 126px,#ff9ec8 153px,#ff6d8d 200px,#ff2d44 269px,#ff1532 282px,#ff0b2e 284px,#ff002c 285px,#ff0026 288px)"></i>
<i style="top:275px;left:23px;width:284px;background:linear-gradient(90deg,#00caff 0px,#00c9ff 68px,#29c9ff 69px,#42c9ff 71px,#6bc8ff 77px,#9fc8ff 90px,#f6c7ff 121px,#ffc4fc 126px,#ff9ac8 153px,#ff698c 201px,#ff2d4b 264px,#ff173c 276px,#ff0838 279px,#ff0036 280px,#ff0032 283px)"></i>
<i style="top:277px;left:23px;width:280px;background:linear-gradient(90deg,#00c8ff 0px,#00c6ff 67px,#2ec6ff 69px,#4dc6ff 72px,#75c6ff 79px,#afc5ff 95px,#ffc3ff 125px,#ff99ca 152px,#ff688f 199px,#ff2d52 260px,#ff1644 272px,#ff0e41 274px,#ff0040 275px,#ff003b 279px)"></i>
<i style="top:279px;left:24px;width:274px;background:linear-gradient(90deg,#00c6ff 0px,#00c4ff 66px,#20c4ff 67px,#32c4ff 68px,#4fc4ff 71px,#7bc3ff 79px,#b5c2ff 96px,#ffbefd 125px,#ff95c9 152px,#ff648f 199px,#ff2c57 256px,#ff164b 267px,#ff0c48 269px,#ff0047 270px,#ff0044 273px)"></i>
<i style="top:281px;left:24px;width:270px;background:linear-gradient(90deg,#00c4ff 0px,#00c1ff 66px,#26c1ff 67px,#40c1ff 69px,#63c1ff 74px,#96c0ff 86px,#e3beff 113px,#ffbcfe 125px,#ff91c9 153px,#ff608e 201px,#ff2c5c 252px,#ff1551 263px,#ff004e 266px,#ff004a 269px)"></i>
<i style="top:283px;left:25px;width:265px;background:linear-gradient(90deg,#00c3ff 0px,#00bfff 64px,#10bfff 65px,#2bbfff 66px,#4bbfff 69px,#73beff 76px,#acbdff 92px,#ffb9ff 124px,#ff8fca 152px,#ff5d8f 200px,#ff2c62 247px,#ff1457 258px,#ff0054 261px,#ff0051 264px)"></i>
<i style="top:285px;left:25px;width:260px;background:linear-gradient(90deg,#00c1ff 0px,#00bdff 64px,#1cbcff 65px,#30bcff 66px,#4dbcff 69px,#78bbff 77px,#b2baff 94px,#ffb4fd 125px,#ff8bc9 153px,#ff588e 202px,#ff2a66 244px,#ff135c 254px,#ff0d5b 255px,#ff005a 256px,#ff0057 259px)"></i>
<i style="top:287px;left:26px;width:255px;background:linear-gradient(90deg,#00bfff 0px,#00baff 63px,#23baff 64px,#3ebaff 66px,#61b9ff 71px,#93b8ff 83px,#dfb5ff 110px,#ffb1fe 124px,#ff87c8 153px,#ff538d 203px,#ff286a 240px,#ff1262 249px,#ff0060 251px,#ff005d 254px)"></i>
<i style="top:289px;left:26px;width:251px;background:linear-gradient(90deg,#00bdff 0px,#00b8ff 63px,#29b8ff 64px,#41b7ff 66px,#68b7ff 72px,#9ab5ff 85px,#ebb1ff 115px,#ffadfc 125px,#ff83c8 154px,#ff4e8c 205px,#ff266e 237px,#ff1067 245px,#ff0065 247px,#ff0062 250px)"></i>
<i style="top:291px;left:27px;width:245px;background:linear-gradient(90deg,#00bbff 0px,#00b5ff 61px,#2db5ff 63px,#4bb5ff 66px,#76b4ff 74px,#afb1ff 91px,#ffabff 123px,#ff82ca 152px,#ff4d8f 202px,#ff2673 232px,#ff146d 239px,#ff0e6c 240px,#ff006b 241px,#ff0068 244px)"></i>
<i style="top:293px;left:27px;width:241px;background:linear-gradient(90deg,#00b9ff 0px,#00b3ff 61px,#20b3ff 62px,#3cb3ff 64px,#60b2ff 69px,#91b0ff 81px,#dbabff 108px,#ffa7fd 124px,#ff7ec9 153px,#ff478e 204px,#ff2276 230px,#ff1371 235px,#ff0c71 236px,#ff0070 237px,#ff006d 240px)"></i>
<i style="top:295px;left:28px;width:236px;background:linear-gradient(90deg,#00b7ff 0px,#00b1ff 60px,#26b0ff 61px,#3fb0ff 63px,#66afff 69px,#98adff 82px,#e7a7ff 112px,#ffa2fc 124px,#ff78c7 154px,#ff3e8b 207px,#ff1f7a 226px,#ff1176 230px,#ff0074 232px,#ff0072 235px)"></i>
<i style="top:297px;left:28px;width:232px;background:linear-gradient(90deg,#00b5ff 0px,#00aeff 59px,#2baeff 61px,#49adff 64px,#70acff 71px,#a7aaff 87px,#ffa1ff 123px,#ff77ca 153px,#ff3c8e 205px,#ff1f7f 222px,#ff107b 226px,#ff037a 227px,#ff0076 231px)"></i>
<i style="top:299px;left:29px;width:226px;background:linear-gradient(90deg,#00b3ff 0px,#00acff 58px,#1dacff 59px,#2fabff 60px,#4babff 63px,#75aaff 71px,#b0a6ff 89px,#ff9dff 122px,#ff74ca 152px,#ff368f 204px,#ff1b82 218px,#ff0e80 221px,#ff007f 222px,#ff007c 225px)"></i>
<i style="top:301px;left:30px;width:221px;background:linear-gradient(90deg,#00b1ff 0px,#00a9ff 57px,#23a9ff 58px,#3da9ff 60px,#64a8ff 66px,#96a5ff 79px,#e39eff 109px,#ff99fe 122px,#ff6fca 152px,#ff2d8e 205px,#ff1786 214px,#ff0b84 216px,#ff0083 217px,#ff0081 220px)"></i>
<i style="top:303px;left:30px;width:217px;background:linear-gradient(90deg,#00afff 0px,#00a7ff 56px,#09a7ff 57px,#28a7ff 58px,#48a6ff 61px,#6ea5ff 68px,#a5a1ff 84px,#fe96ff 121px,#ff67c5 156px,#ff2d93 201px,#ff168b 210px,#ff0088 213px,#ff0085 216px)"></i>
<i style="top:305px;left:31px;width:211px;background:linear-gradient(90deg,#00adff 0px,#00a5ff 55px,#2da4ff 57px,#4aa4ff 60px,#73a2ff 68px,#ad9eff 86px,#ff92ff 121px,#ff67ca 152px,#ff2d98 196px,#ff158f 205px,#ff0f8e 206px,#ff008d 207px,#ff008b 210px)"></i>
<i style="top:307px;left:31px;width:207px;background:linear-gradient(90deg,#00abff 0px,#00a2ff 55px,#20a2ff 56px,#3ba1ff 58px,#5da0ff 63px,#8d9eff 75px,#d496ff 102px,#ff8dfd 122px,#ff62c9 153px,#ff2d9d 192px,#ff1494 201px,#ff0092 203px,#ff008f 206px)"></i>
<i style="top:309px;left:32px;width:202px;background:linear-gradient(90deg,#00a9ff 0px,#00a0ff 54px,#269fff 55px,#3e9fff 57px,#639eff 63px,#979aff 77px,#e490ff 108px,#ff88fc 122px,#ff5cc7 154px,#ff2ba1 188px,#ff179a 195px,#ff0097 198px,#ff0094 201px)"></i>
<i style="top:311px;left:33px;width:196px;background:linear-gradient(90deg,#00a7ff 0px,#009dff 52px,#2a9dff 54px,#489cff 57px,#719aff 65px,#ab95ff 83px,#ff86ff 120px,#ff59c9 152px,#ff2ba5 183px,#ff169e 190px,#ff109d 191px,#ff009d 192px,#ff009a 195px)"></i>
<i style="top:313px;left:33px;width:192px;background:linear-gradient(90deg,#00a5ff 0px,#009bff 52px,#1d9bff 53px,#2e9aff 54px,#5099ff 58px,#7a97ff 67px,#b591ff 87px,#ff81fd 121px,#ff54c9 153px,#ff28a9 180px,#ff15a3 186px,#ff0ea2 187px,#ff00a1 188px,#ff009e 191px)"></i>
<i style="top:315px;left:34px;width:187px;background:linear-gradient(90deg,#00a3ff 0px,#0098ff 51px,#2398ff 52px,#3c98ff 54px,#6296ff 60px,#9592ff 74px,#e186ff 105px,#ff7dfe 120px,#ff4fca 152px,#ff26ad 176px,#ff14a8 181px,#ff00a6 183px,#ff00a3 186px)"></i>
<i style="top:317px;left:35px;width:182px;background:linear-gradient(90deg,#00a0ff 0px,#0096ff 49px,#0d96ff 50px,#2895ff 51px,#4695ff 54px,#7092ff 62px,#a88cff 80px,#ff79fe 119px,#ff4aca 151px,#ff26b2 171px,#ff12ad 176px,#ff00ab 178px,#ff00a8 181px)"></i>
<i style="top:319px;left:35px;width:177px;background:linear-gradient(90deg,#009eff 0px,#0093ff 49px,#1a93ff 50px,#2c93ff 51px,#4892ff 54px,#7090ff 62px,#a889ff 80px,#ff75ff 119px,#ff43ca 152px,#ff22b7 168px,#ff10b2 172px,#ff00b1 173px,#ff00ae 176px)"></i>
<i style="top:321px;left:36px;width:172px;background:linear-gradient(90deg,#009cff 0px,#0091ff 48px,#2091ff 49px,#3a90ff 51px,#608eff 57px,#908aff 70px,#d77dff 99px,#ff70fd 119px,#ff3bc9 152px,#ff1ebb 164px,#ff0db7 167px,#ff00b6 168px,#ff00b3 171px)"></i>
<i style="top:323px;left:37px;width:167px;background:linear-gradient(90deg,#009aff 0px,#008eff 47px,#268eff 48px,#458dff 51px,#6a8bff 58px,#9e85ff 74px,#f271ff 111px,#ff6afc 119px,#ff2fc7 153px,#ff19bf 160px,#ff00bc 163px,#ff00b8 166px)"></i>
<i style="top:325px;left:38px;width:161px;background:linear-gradient(90deg,#0098ff 0px,#008cff 45px,#2a8bff 47px,#468aff 50px,#6f87ff 58px,#a680ff 76px,#ff67ff 117px,#ff2dcc 149px,#ff18c4 155px,#ff12c3 156px,#ff00c2 157px,#ff00bf 160px)"></i>
<i style="top:327px;left:38px;width:157px;background:linear-gradient(90deg,#0095ff 0px,#0089ff 45px,#1d89ff 46px,#3888ff 48px,#5a86ff 53px,#8882ff 65px,#cc74ff 92px,#ff60fd 118px,#ff2dd2 145px,#ff17ca 151px,#ff0fc9 152px,#ff00c8 153px,#ff00c4 156px)"></i>
<i style="top:329px;left:39px;width:152px;background:linear-gradient(90deg,#0093ff 0px,#0087ff 44px,#2386ff 45px,#3b85ff 47px,#6083ff 53px,#917dff 67px,#da6cff 98px,#ff59fc 118px,#ff2ad7 141px,#ff15d0 146px,#ff00cd 148px,#ff00ca 151px)"></i>
<i style="top:331px;left:40px;width:146px;background:linear-gradient(90deg,#0091ff 0px,#0084ff 42px,#1084ff 43px,#2883ff 44px,#4582ff 47px,#6d7fff 55px,#a477ff 73px,#fc57ff 114px,#ff2dde 135px,#ff1ad7 140px,#ff13d6 141px,#ff04d5 142px,#ff00d1 145px)"></i>
<i style="top:333px;left:40px;width:142px;background:linear-gradient(90deg,#008eff 0px,#0081ff 42px,#1a81ff 43px,#2c81ff 44px,#4d7fff 48px,#797bff 58px,#b56fff 80px,#fd50ff 115px,#ff2ae4 132px,#ff19de 136px,#ff11dc 137px,#ff00db 138px,#ff00d7 141px)"></i>
<i style="top:335px;left:41px;width:137px;background:linear-gradient(90deg,#008cff 0px,#007fff 41px,#217eff 42px,#397dff 44px,#5e7bff 50px,#8f74ff 64px,#d75fff 95px,#ff45fe 116px,#ff22e7 129px,#ff0ee3 132px,#ff00e1 133px,#ff00dd 136px)"></i>
<i style="top:337px;left:42px;width:132px;background:linear-gradient(90deg,#0089ff 0px,#007cff 40px,#267bff 41px,#437aff 44px,#6c76ff 52px,#a26cff 70px,#ed4dff 105px,#ff3bfc 116px,#ff1ced 125px,#ff00e8 128px,#ff00e3 131px)"></i>
<i style="top:339px;left:43px;width:126px;background:linear-gradient(90deg,#0087ff 0px,#0079ff 38px,#2a78ff 40px,#4577ff 43px,#6c73ff 51px,#a269ff 69px,#e849ff 102px,#ff30fd 115px,#ff1bf4 120px,#ff13f2 121px,#ff00f1 122px,#ff00ec 125px)"></i>
<i style="top:341px;left:44px;width:121px;background:linear-gradient(90deg,#0084ff 0px,#0076ff 37px,#1e76ff 38px,#3875ff 40px,#5c72ff 46px,#8d6aff 60px,#d550ff 91px,#f534ff 108px,#ff20fd 114px,#ff10fa 116px,#ff00f8 117px,#ff00f3 120px)"></i>
<i style="top:343px;left:44px;width:117px;background:linear-gradient(90deg,#0082ff 0px,#0073ff 37px,#2373ff 38px,#3a72ff 40px,#5e6fff 46px,#8e66ff 60px,#d44aff 91px,#f12dff 106px,#fb17ff 111px,#fe00ff 113px,#ff00fa 116px)"></i>
<i style="top:345px;left:45px;width:111px;background:linear-gradient(90deg,#007fff 0px,#0071ff 35px,#2870ff 37px,#446eff 40px,#6b6aff 48px,#a05dff 66px,#da3eff 93px,#ed25ff 103px,#f315ff 106px,#f500ff 107px,#fa00ff 110px)"></i>
<i style="top:347px;left:46px;width:106px;background:linear-gradient(90deg,#007cff 0px,#006dff 34px,#1b6dff 35px,#2b6cff 36px,#4c6aff 40px,#7664ff 50px,#b052ff 72px,#da35ff 92px,#e71fff 99px,#eb12ff 101px,#ed00ff 102px,#f200ff 105px)"></i>
<i style="top:349px;left:47px;width:101px;background:linear-gradient(90deg,#0079ff 0px,#006aff 33px,#216aff 34px,#3869ff 36px,#5c65ff 42px,#8c5bff 56px,#ca3cff 83px,#dd22ff 93px,#e118ff 95px,#e500ff 97px,#ea00ff 100px)"></i>
<i style="top:351px;left:48px;width:95px;background:linear-gradient(90deg,#0076ff 0px,#0067ff 31px,#0a67ff 32px,#2566ff 33px,#4264ff 36px,#695fff 44px,#9e50ff 62px,#ca33ff 82px,#d71cff 89px,#dd00ff 92px,#e100ff 94px)"></i>
<i style="top:353px;left:49px;width:90px;background:linear-gradient(90deg,#0073ff 0px,#0064ff 30px,#2963ff 32px,#4461ff 35px,#6a5bff 43px,#9e4aff 61px,#c32fff 78px,#cf1aff 84px,#d112ff 85px,#d300ff 86px,#d900ff 89px)"></i>
<i style="top:355px;left:50px;width:85px;background:linear-gradient(90deg,#0070ff 0px,#0061ff 29px,#1e60ff 30px,#375fff 32px,#5b5aff 38px,#8a4eff 52px,#b930ff 72px,#c51dff 78px,#c90fff 80px,#cb00ff 81px,#d100ff 84px)"></i>
<i style="top:357px;left:51px;width:80px;background:linear-gradient(90deg,#006dff 0px,#005dff 28px,#235cff 29px,#415aff 32px,#6853ff 40px,#9c3fff 58px,#b924ff 71px,#bf15ff 74px,#c300ff 76px,#c900ff 79px)"></i>
<i style="top:359px;left:52px;width:74px;background:linear-gradient(90deg,#006aff 0px,#005aff 26px,#2758ff 28px,#4256ff 31px,#694fff 39px,#9c38ff 57px,#b31fff 67px,#b713ff 69px,#b900ff 70px,#bf00ff 73px)"></i>
<i style="top:361px;left:53px;width:69px;background:linear-gradient(90deg,#0066ff 0px,#0056ff 25px,#1b55ff 26px,#3553ff 28px,#594eff 34px,#883eff 48px,#a625ff 60px,#af10ff 64px,#b100ff 65px,#b700ff 68px)"></i>
<i style="top:363px;left:55px;width:63px;background:linear-gradient(90deg,#0062ff 0px,#0052ff 23px,#2151ff 24px,#384fff 26px,#5a49ff 32px,#8936ff 46px,#9f20ff 55px,#a416ff 57px,#a800ff 59px,#af00ff 62px)"></i>
<i style="top:365px;left:56px;width:57px;background:linear-gradient(90deg,#005eff 0px,#004eff 21px,#0d4dff 22px,#254cff 23px,#4149ff 26px,#6740ff 34px,#9125ff 48px,#9b13ff 52px,#9d03ff 53px,#a400ff 56px)"></i>
<i style="top:367px;left:57px;width:52px;background:linear-gradient(90deg,#005aff 0px,#0049ff 20px,#1848ff 21px,#2947ff 22px,#4943ff 26px,#7234ff 36px,#8c1dff 45px,#9111ff 47px,#9400ff 48px,#9b00ff 51px)"></i>
<i style="top:369px;left:59px;width:46px;background:linear-gradient(90deg,#0055ff 0px,#0044ff 18px,#1e43ff 19px,#3641ff 21px,#5938ff 27px,#7f1fff 38px,#870dff 41px,#8a00ff 42px,#9100ff 45px)"></i>
<i style="top:371px;left:61px;width:39px;background:linear-gradient(90deg,#004fff 0px,#003eff 16px,#233dff 17px,#4039ff 20px,#662aff 28px,#7a14ff 34px,#7f00ff 36px,#8500ff 38px)"></i>
<i style="top:373px;left:63px;width:33px;background:linear-gradient(90deg,#0049ff 0px,#003aff 13px,#2736ff 15px,#4131ff 18px,#671dff 26px,#6e11ff 28px,#7100ff 29px,#7a00ff 32px)"></i>
<i style="top:375px;left:65px;width:27px;background:linear-gradient(90deg,#0042ff 0px,#0032ff 11px,#1c30ff 12px,#352dff 14px,#581bff 20px,#600eff 22px,#6400ff 23px,#6e00ff 26px)"></i>
<i style="top:377px;left:67px;width:21px;background:linear-gradient(90deg,#0039ff 0px,#0029ff 9px,#2127ff 10px,#3e1eff 13px,#4a14ff 15px,#5400ff 17px,#6100ff 20px)"></i>
<i style="top:379px;left:69px;width:14px;background:linear-gradient(90deg,#002fff 0px,#0020ff 6px,#0f1cff 7px,#2518ff 8px,#3012ff 9px,#3900ff 10px,#4c00ff 13px)"></i>
<i style="top:381px;left:72px;width:7px;background:linear-gradient(90deg,#001bff 0px,#000fff 2px,#0000ff 3px,#1900ff 4px,#3300ff 6px)"></i>
</div>
<svg class="a" style="left:0;top:0" width="378" height="384" viewBox="73 168 378 384">
<g stroke="#000" stroke-opacity=".14" stroke-width=".95" fill="none">
<path d="M116.4 168V552M159.1 168V552M201.7 168V552M243.8 168V552M287.1 168V552M329.4 168V552M371.5 168V552M414.6 168V552"/>
<path d="M73 210.5H451M73 254H451M73 296.5H451M73 338.4H451M73 381.2H451M73 424H451M73 466H451M73 509.4H451"/>
</g>
<path d="M74.5 168V552" stroke="#747474" stroke-width="1.4" fill="none"/>
<path d="M73 551.2H451" stroke="#707070" stroke-width="1.5" fill="none"/>
<path d="M204.3 296.7L339.6 409.2L142.6 515.8Z" stroke="#f0a42a" stroke-width="1.25" stroke-opacity=".95" fill="none" stroke-linejoin="miter"/>
<path d="M227.2 310.3L368.4 431.5L137.5 518.4Z" stroke="#000" stroke-width="1.25" fill="none" stroke-linejoin="miter"/>
</svg>
</div>

<!-- bar chart -->
<div id="bars">
<svg class="a" style="left:-1px;top:-1px" width="385" height="384" viewBox="484 168 385 384">
<g stroke="#000" stroke-opacity=".13" stroke-width="1.2"><path d="M485 245.5H868M485 321.8H868M485 397.6H868M485 473.3H868"/></g>
<g stroke="#000" stroke-width="1.4">
<rect x="552.6" y="493" width="13.6" height="60" fill="#333"/>
<rect x="570.7" y="503.6" width="13.6" height="50" fill="#454545"/>
<rect x="588.8" y="523.4" width="13.6" height="30" fill="#888"/>
<rect x="606.9" y="519" width="13.6" height="35" fill="#c8c8c8"/>
<rect x="642.8" y="461.6" width="13.6" height="92" fill="#f00"/>
<rect x="660.8" y="457.2" width="13.6" height="96" fill="#0f0"/>
<rect x="678.8" y="178.2" width="13.6" height="375" fill="#00f"/>
<rect x="696.8" y="481.4" width="13.6" height="72" fill="#0ff"/>
<rect x="714.8" y="501.1" width="13.6" height="52" fill="#f0f"/>
<rect x="732.8" y="423.1" width="13.6" height="130" fill="#ff0"/>
<rect x="750.8" y="484.3" width="13.6" height="69" fill="#b05858"/>
<rect x="768.8" y="527.9" width="13.6" height="26" fill="#58b060"/>
<rect x="786.8" y="392.7" width="13.6" height="160" fill="#5858b0"/>
<rect x="804.8" y="501.1" width="13.6" height="52" fill="#58b0b0"/>
<rect x="822.8" y="516.2" width="13.6" height="37" fill="#b058b0"/>
<rect x="840.8" y="477.1" width="13.6" height="76" fill="#b0b060"/>
</g>
<rect x="485.15" y="168.85" width="382.6" height="382.5" fill="none" stroke="#000" stroke-width="1.6"/>
</svg>
</div>

<!-- table -->

<!-- buttons -->
<svg class="a" style="left:0;top:690px" width="938" height="50" viewBox="0 690 938 50">
<rect x="30.4" y="698" width="109.3" height="30.8" fill="#0078d7"/>
<rect x="32.7" y="700.3" width="104.7" height="26.2" fill="#e1e1e1"/>
<rect x="33.7" y="701.3" width="102.7" height="24.2" fill="none" stroke="#000" stroke-width="1" stroke-dasharray="1 1.02"/>
<g fill="#e1e1e1" stroke="#adadad" stroke-width="1.1">
<rect x="158.3" y="698.8" width="107.9" height="29"/>
<rect x="672.5" y="698.8" width="108.1" height="29"/>
<rect x="800" y="698.8" width="108.1" height="29"/>
</g>
</svg>
<div class="a t" style="left:36.62px;top:12.40px;font-size:17.3px;transform:scaleX(1.0448);-webkit-text-stroke:0">blue eye pro</div>
<div class="a t" style="left:13.56px;top:45.80px;font-size:17.6px;transform:scaleX(1.0016);-webkit-text-stroke:0">Tools</div>
<div class="a t" style="left:73.70px;top:45.80px;font-size:17.6px;transform:scaleX(1.0179);-webkit-text-stroke:0">Device</div>
<div class="a t" style="left:147.70px;top:45.80px;font-size:17.6px;transform:scaleX(1.0869);-webkit-text-stroke:0">Help</div>
<div class="a t" style="left:594.96px;top:106.00px;font-size:36px;transform:scaleX(1.0071);font-weight:bold;-webkit-text-stroke:0">Calibration Report</div>
<div class="a t" style="left:145.58px;top:143.90px;font-size:15px;transform:scaleX(0.9751)">sRGB</div>
<div class="a t" style="left:227.58px;top:143.90px;font-size:15px;transform:scaleX(1.0104)">Adobe RGB</div>
<div class="a t" style="left:350.41px;top:143.90px;font-size:15px;transform:scaleX(1.1025)">ISOcoated</div>
<div class="a t" style="left:324.18px;top:242.70px;font-size:19px;transform:scaleX(1.0571);font-weight:bold;-webkit-text-stroke:0">Monitor</div>
<div class="a t" style="left:324.25px;top:266.90px;font-size:19px;transform:scaleX(1.0735);font-weight:bold;color:#f5a524;-webkit-text-stroke:0">sRGB</div>
<div class="a t" style="left:77.93px;top:171.60px;font-size:11.8px;transform:scaleX(1.0343);color:#262626">y</div>
<div class="a t" style="left:77.10px;top:204.70px;font-size:11.8px;transform:scaleX(1.1241);color:#262626">0.8</div>
<div class="a t" style="left:77.10px;top:290.50px;font-size:11.8px;transform:scaleX(1.1262);color:#262626">0.6</div>
<div class="a t" style="left:77.11px;top:375.70px;font-size:11.8px;transform:scaleX(1.1121);color:#262626">0.4</div>
<div class="a t" style="left:77.09px;top:460.70px;font-size:11.8px;transform:scaleX(1.1353);color:#262626">0.2</div>
<div class="a t" style="left:78.67px;top:538.50px;font-size:11.8px;transform:scaleX(0.8135);color:#262626">0</div>
<div class="a t" style="left:150.41px;top:538.50px;font-size:11.8px;transform:scaleX(1.1087);color:#262626">0.2</div>
<div class="a t" style="left:234.41px;top:538.50px;font-size:11.8px;transform:scaleX(1.1056);color:#262626">0.4</div>
<div class="a t" style="left:320.13px;top:538.50px;font-size:11.8px;transform:scaleX(1.0735);color:#262626">0.6</div>
<div class="a t" style="left:406.22px;top:538.50px;font-size:11.8px;transform:scaleX(1.0913);color:#262626">0.8</div>
<div class="a" style="left:0;top:0;width:450px;height:751px;overflow:hidden"><div class="a t" style="left:445.66px;top:538.50px;font-size:11.8px;transform:scaleX(1.2143);color:#262626">x</div></div>
<div class="a t" style="left:487.27px;top:170.50px;font-size:10.5px;transform:scaleX(1.1091);color:rgba(0,0,0,.8);word-spacing:0.6px;-webkit-text-stroke:.3px">10 d E 94</div>
<div class="a t" style="left:487.01px;top:239.50px;font-size:10.5px;transform:scaleX(1.1072);color:rgba(0,0,0,.8);word-spacing:0.6px;-webkit-text-stroke:.3px">8 d E 94</div>
<div class="a t" style="left:486.93px;top:315.80px;font-size:10.5px;transform:scaleX(1.1089);color:rgba(0,0,0,.8);word-spacing:0.6px;-webkit-text-stroke:.3px">6 d E 94</div>
<div class="a t" style="left:487.23px;top:391.50px;font-size:10.5px;transform:scaleX(1.1015);color:rgba(0,0,0,.8);word-spacing:0.6px;-webkit-text-stroke:.3px">4 d E 94</div>
<div class="a t" style="left:486.96px;top:467.10px;font-size:10.5px;transform:scaleX(1.1083);color:rgba(0,0,0,.8);word-spacing:0.6px;-webkit-text-stroke:.3px">2 d E 94</div>
<div class="a t" style="left:168.25px;top:570.20px;font-size:17.4px;transform:scaleX(1.0185)">Target</div>
<div class="a t" style="left:262.29px;top:570.20px;font-size:17.4px;transform:scaleX(1.0703)">Current</div>
<div class="a t" style="left:357.64px;top:570.20px;font-size:17.4px;transform:scaleX(1.0668)">Deviation</div>
<div class="a t" style="left:70.80px;top:592.70px;font-size:17.4px;transform:scaleX(1.0674)">Gamma</div>
<div class="a t" style="left:166.86px;top:592.70px;font-size:17.4px;transform:scaleX(1.0104)">2.2</div>
<div class="a t" style="left:262.32px;top:592.70px;font-size:17.4px;transform:scaleX(1.0680);color:#3d9b35">2.2</div>
<div class="a t" style="left:359.48px;top:592.70px;font-size:17.4px;transform:scaleX(1.0281);color:#3d9b35">1%</div>
<div class="a t" style="left:70.17px;top:615.20px;font-size:17.4px;transform:scaleX(1.0440)">Kelvin</div>
<div class="a t" style="left:166.81px;top:615.20px;font-size:17.4px;transform:scaleX(1.0562)">6500</div>
<div class="a t" style="left:262.34px;top:615.20px;font-size:17.4px;transform:scaleX(1.0832);color:#ef8a43">3702</div>
<div class="a t" style="left:358.73px;top:615.20px;font-size:17.4px;transform:scaleX(1.0602);color:#ef8a43">43%</div>
<div class="a t" style="left:70.89px;top:637.70px;font-size:17.4px;transform:scaleX(1.0836)">cd/m2</div>
<div class="a t" style="left:167.80px;top:637.70px;font-size:17.4px;transform:scaleX(1.0130)">120</div>
<div class="a t" style="left:263.47px;top:637.70px;font-size:17.4px;transform:scaleX(1.0309);color:#ef8a43">156</div>
<div class="a t" style="left:358.35px;top:637.70px;font-size:17.4px;transform:scaleX(1.0711);color:#ef8a43">30%</div>
<div class="a t" style="left:483.69px;top:570.60px;font-size:17.4px;transform:scaleX(1.0282)">Delta E Average</div>
<div class="a t" style="left:653.21px;top:570.60px;font-size:17.4px;transform:scaleX(1.0754);color:#3d9b35">2.1</div>
<div class="a t" style="left:483.65px;top:592.90px;font-size:17.4px;transform:scaleX(1.0580)">Delta E Maximum</div>
<div class="a t" style="left:653.25px;top:592.90px;font-size:17.4px;transform:scaleX(1.0713);color:#ef8a43">9.8</div>
<div class="a t" style="left:44.78px;top:706.70px;font-size:15px;transform:scaleX(1.0547)">Main Menu</div>
<div class="a t" style="left:172.46px;top:706.70px;font-size:15px;transform:scaleX(1.0899)">Calibration</div>
<div class="a t" style="left:705.68px;top:706.70px;font-size:15px;transform:scaleX(1.1028)">Save</div>
<div class="a t" style="left:837.40px;top:706.70px;font-size:15px;transform:scaleX(1.0932)">Quit</div>
</body></html>
